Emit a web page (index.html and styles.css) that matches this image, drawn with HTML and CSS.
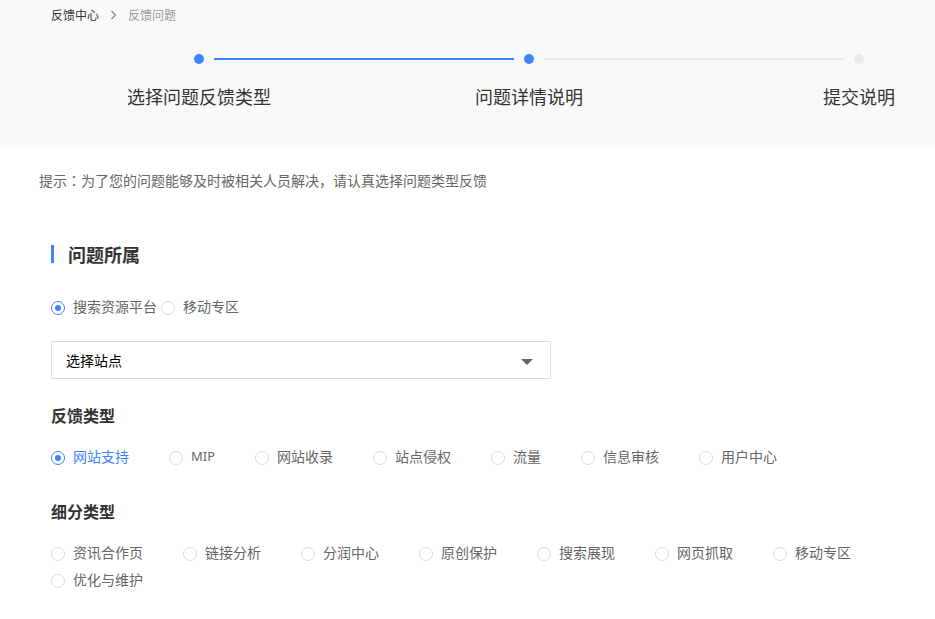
FILE: index.html
```
<!DOCTYPE html>
<html lang="zh-CN">
<head>
    <meta charset="UTF-8">
    <meta name="viewport" content="width=device-width, initial-scale=1.0">
    <title>反馈问题</title>
    <link rel="stylesheet" href="styles.css">
</head>
<body>
    <header class="top">
        <nav class="crumbs">
            <a href="#">反馈中心</a>
            <svg class="arrow" viewBox="0 0 5 8" width="5" height="8"><path d="M.5 0L4.5 4 .5 8" /></svg>
            <span>反馈问题</span>
        </nav>
        <div class="steps">
            <div class="step done"><i class="dot"></i><span class="name">选择问题反馈类型</span></div>
            <div class="line done"></div>
            <div class="step done"><i class="dot"></i><span class="name">问题详情说明</span></div>
            <div class="line"></div>
            <div class="step"><i class="dot"></i><span class="name">提交说明</span></div>
        </div>
    </header>

    <p class="tip">提示<span class="colon" lang="zh-TW">：</span>为了您的问题能够及时被相关人员解决，请认真选择问题类型反馈</p>

    <form class="feedback">
        <h2 id="belong">问题所属</h2>
        <div class="radios platform" role="radiogroup" aria-labelledby="belong">
            <label><input type="radio" name="platform" checked>搜索资源平台</label>
            <label><input type="radio" name="platform">移动专区</label>
        </div>

        <div class="select">
            <select name="site" aria-label="选择站点">
                <option>选择站点</option>
            </select>
        </div>

        <h3 id="type">反馈类型</h3>
        <div class="radios types" role="radiogroup" aria-labelledby="type">
            <label><input type="radio" name="type" checked>网站支持</label>
            <label class="latin"><input type="radio" name="type">MIP</label>
            <label><input type="radio" name="type">网站收录</label>
            <label><input type="radio" name="type">站点侵权</label>
            <label><input type="radio" name="type">流量</label>
            <label><input type="radio" name="type">信息审核</label>
            <label><input type="radio" name="type">用户中心</label>
        </div>

        <h3 id="subtype">细分类型</h3>
        <div class="radios" role="radiogroup" aria-labelledby="subtype">
            <label><input type="radio" name="subtype">资讯合作页</label>
            <label><input type="radio" name="subtype">链接分析</label>
            <label><input type="radio" name="subtype">分润中心</label>
            <label><input type="radio" name="subtype">原创保护</label>
            <label><input type="radio" name="subtype">搜索展现</label>
            <label><input type="radio" name="subtype">网页抓取</label>
            <label><input type="radio" name="subtype">移动专区</label>
            <label><input type="radio" name="subtype">优化与维护</label>
        </div>
    </form>
</body>
</html>
```
FILE: styles.css
```
* {
    box-sizing: border-box;
}
body {
    margin: 0;
    background: #fff;
    color: #666;
    font: 14px/20px "Noto Sans CJK SC", sans-serif;
}
h2, h3, p {
    margin: 0;
}

/* header */
.top {
    padding-bottom: 39px;
    background: #f9f9f9;
}
.crumbs {
    display: flex;
    align-items: center;
    gap: 12px;
    padding-left: 51px;
    font-size: 12px;
    line-height: 30px;
    color: #999;
}
.crumbs a {
    color: #333;
    text-decoration: none;
}
.arrow {
    fill: none;
    stroke: #888;
    stroke-width: 1.2;
    overflow: visible;
}

/* labels are wider than the dots and hang centred below them */
.steps {
    display: flex;
    padding: 24px 71px 0 194px;
}
.step {
    display: flex;
    flex-direction: column;
    align-items: center;
    gap: 20px;
    width: 10px;
}
.dot {
    width: 10px;
    height: 10px;
    border-radius: 50%;
    background: #ebebeb;
}
.name {
    font-size: 18px;
    line-height: 24px;
    color: #333;
    white-space: nowrap;
}
.line {
    flex: 1;
    height: 2px;
    margin: 4px 10px 0;
    background: #ebebeb;
}
.step.done .dot,
.line.done {
    background: #4083ff;
}

.tip {
    padding: 23px 39px 0;
}
.colon {
    font-family: "Noto Sans CJK TC", sans-serif;
}

/* form */
.feedback {
    padding: 55px 51px 24px;
}
h2 {
    padding-left: 14px;
    border-left: 3px solid #4083ff;
    font-size: 18px;
    line-height: 18px;
    color: #333;
}
h3 {
    margin: 24px 0 16px;
    font-size: 16px;
    line-height: 24px;
    color: #333;
}
.radios {
    display: flex;
    flex-wrap: wrap;
    column-gap: 40px;
    line-height: 27px;
}
.radios label {
    display: flex;
    align-items: center;
    gap: 8px;
}
.radios .latin {
    font-family: "Noto Sans", sans-serif;
    font-size: 13px;
}
.radios input {
    appearance: none;
    display: grid;
    place-content: center;
    width: 14px;
    height: 14px;
    margin: 2px 0 0;
    border: 1px solid #ddd;
    border-radius: 50%;
    background: #fff;
}
.radios input:checked {
    border-color: #4083ff;
}
.radios input:checked::before {
    content: "";
    width: 6px;
    height: 6px;
    border-radius: 50%;
    background: #4083ff;
}
.platform {
    column-gap: 4px;
    margin: 30px 0 21px;
}
.types {
    margin-bottom: 29px;
}
.types label:has(:checked) {
    color: #4083ff;
}

.select {
    position: relative;
    max-width: 500px;
}
.select select {
    display: block;
    appearance: none;
    width: 100%;
    height: 38px;
    padding: 0 14px;
    border: 1px solid #ddd;
    border-radius: 0;
    background: #fff;
    color: #000;
    font: inherit;
}
.select::after {
    content: "";
    position: absolute;
    top: 18px;
    right: 18px;
    border: 6px solid transparent;
    border-top-color: #666;
    border-bottom: 0;
    pointer-events: none;
}
```
